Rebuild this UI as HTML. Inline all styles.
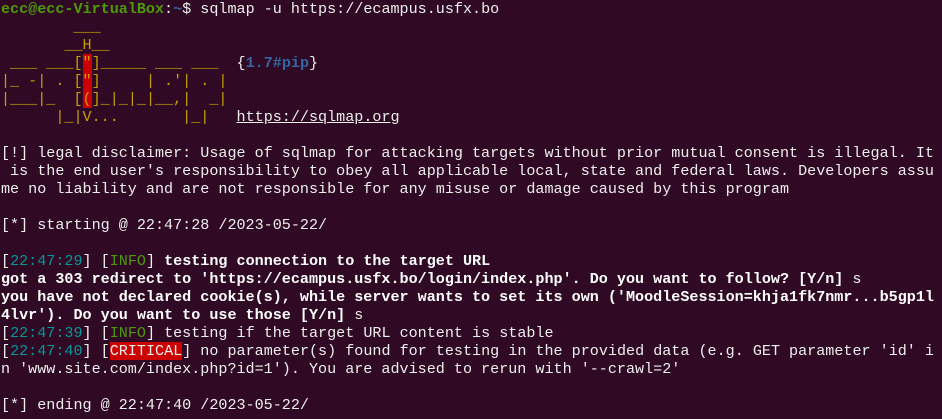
<!DOCTYPE html>
<html><head><meta charset="utf-8"><style>
html,body{margin:0;padding:0;background:#300a24;width:942px;height:419px;overflow:hidden}
pre{margin:0;padding:0 0 0 1px;font-family:"Liberation Mono",monospace;font-size:15.1px;line-height:18px;color:#eeeeee;white-space:pre}
b{font-weight:bold;color:#ffffff}
.g{color:#4e9a06;font-weight:bold}
.bl{color:#3465a4;font-weight:bold}
.y{color:#c4a000}
.r{background:#cc0000;color:#c4a000;display:inline-block;height:18px;vertical-align:top}
.c{color:#06989a}
.i{color:#4e9a06}
.cr{background:#cc0000;color:#eeeeee}
.u{text-decoration:underline}
</style></head><body><pre><span class="g">ecc@ecc-VirtualBox</span>:<span class="bl">~</span>$ sqlmap -u https://ecampus.usfx.bo
<span class="y">        ___</span>
<span class="y">       __H__</span>
<span class="y"> ___ ___[<span class="r">"</span>]_____ ___ ___</span>  {<span class="bl">1.7#pip</span>}
<span class="y">|_ -| . [<span class="r">"</span>]     | .'| . |</span>
<span class="y">|___|_  [<span class="r">(</span>]_|_|_|__,|  _|</span>
<span class="y">      |_|V...       |_|</span>   <span class="u">https://sqlmap.org</span>

[!] legal disclaimer: Usage of sqlmap for attacking targets without prior mutual consent is illegal. It
 is the end user's responsibility to obey all applicable local, state and federal laws. Developers assu
me no liability and are not responsible for any misuse or damage caused by this program

[*] starting @ 22:47:28 /2023-05-22/

[<span class="c">22:47:29</span>] [<span class="i">INFO</span>] <b>testing connection to the target URL</b>
<b>got a 303 redirect to 'https://ecampus.usfx.bo/login/index.php'. Do you want to follow? [Y/n]</b> s
<b>you have not declared cookie(s), while server wants to set its own ('MoodleSession=khja1fk7nmr...b5gp1l</b>
<b>4lvr'). Do you want to use those [Y/n]</b> s
[<span class="c">22:47:39</span>] [<span class="i">INFO</span>] testing if the target URL content is stable
[<span class="c">22:47:40</span>] [<span class="cr">CRITICAL</span>] no parameter(s) found for testing in the provided data (e.g. GET parameter 'id' i
n 'www.site.com/index.php?id=1'). You are advised to rerun with '--crawl=2'

[*] ending @ 22:47:40 /2023-05-22/
</pre></body></html>
